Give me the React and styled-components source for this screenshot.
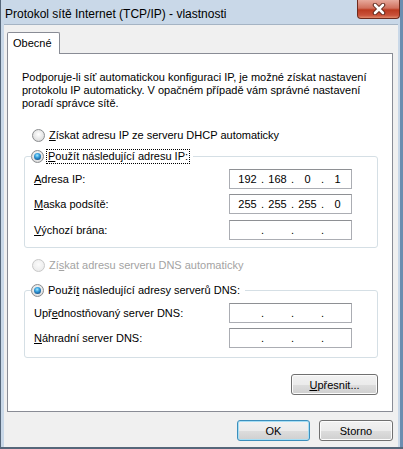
import React from "react";
import styled, { createGlobalStyle } from "styled-components";

const GlobalStyle = createGlobalStyle`
  html, body {
    margin: 0;
    padding: 0;
    background: #ffffff;
  }
  body {
    font-family: "Liberation Sans", Arial, sans-serif;
    font-size: 11px;
    color: #000;
  }
  * {
    box-sizing: border-box;
  }
`;

const Window = styled.div`
  width: 403px;
  height: 449px;
  display: flex;
  flex-direction: column;
  background: #c9d8e8;
  border-left: 1px solid #56677a;
  border-bottom: 2px solid #56677a;
  padding: 0 5px 0 3px;
  box-shadow: inset -3px 0 0 #6c8db0, inset -2px 0 0 #b9cde2;
`;

const TitleBar = styled.div`
  height: 24px;
  flex: none;
  display: flex;
  align-items: flex-start;
  justify-content: space-between;
`;

const Title = styled.span`
  font-size: 12px;
  margin-top: 7px;
  margin-left: 1px;
  color: #000;
`;

const CloseButton = styled.div`
  width: 43px;
  height: 19px;
  margin-right: -2px;
  border: 1px solid #6e2a1c;
  border-top: none;
  border-radius: 0 0 4px 4px;
  background: linear-gradient(#e7a99c 0%, #d0705d 45%, #bb3a20 55%, #c9523a 85%, #e08a6c 100%);
  display: flex;
  align-items: center;
  justify-content: center;
`;

const Client = styled.div`
  flex: 1;
  display: flex;
  flex-direction: column;
  background: #f0f0f0;
  padding: 7px 5px 0 3px;
  border-top: 1px solid #a5b4c4;
`;

const TabStrip = styled.div`
  display: flex;
  height: 21px;
`;

const Tab = styled.div`
  width: 53px;
  height: 22px;
  background: #ffffff;
  border: 1px solid #898c95;
  border-bottom: none;
  border-radius: 2px 2px 0 0;
  padding: 4px 0 0 5px;
  position: relative;
  z-index: 1;
`;

const Panel = styled.div`
  height: 359px;
  flex: none;
  background: #ffffff;
  border: 1px solid #898c95;
  display: flex;
  flex-direction: column;
  padding: 17px 14px 0 16px;
`;

const Intro = styled.p`
  margin: 0 0 0 -2px;
  line-height: 13px;
`;

const RadioRow = styled.label`
  display: flex;
  align-items: center;
  height: 15px;
  margin-top: ${(p) => p.$top || 0}px;
  margin-left: 8px;
  color: ${(p) => (p.$disabled ? "#a3a3a3" : "#000")};
`;

const Radio = styled.span`
  width: 13px;
  height: 13px;
  flex: none;
  border-radius: 50%;
  border: 1px solid ${(p) => (p.$disabled ? "#c8c8c8" : "#8a8c8e")};
  background: ${(p) =>
    p.$disabled
      ? "radial-gradient(circle at 50% 40%, #fbfbfb, #ececec 75%)"
      : "radial-gradient(circle at 50% 40%, #ffffff, #e2e2e2 65%, #cfcfcf)"};
  display: flex;
  align-items: center;
  justify-content: center;
  margin-right: 2px;
`;

const Dot = styled.span`
  width: 7px;
  height: 7px;
  border-radius: 50%;
  background: radial-gradient(circle at 45% 35%, #a8ecff 0, #39a3e0 35%, #13508a 80%, #0d3d6e 100%);
`;

const RadioText = styled.span`
  padding: 1px 1px;
  border: 1px ${(p) => (p.$focus ? "dotted #000" : "solid transparent")};
  line-height: 11px;
`;

const Key = styled.u`
  text-underline-offset: 1px;
`;

const Group = styled.fieldset`
  margin: ${(p) => p.$top}px 0 0 0;
  padding: 0 25px ${(p) => p.$bottom}px 9px;
  border: 1px solid #d5dfe5;
  border-radius: 3px;
  min-width: 0;
`;

const Legend = styled.legend`
  padding: 0 3px 0 0;
  margin-left: -3px;
`;

const LegendRow = styled.span`
  display: flex;
  align-items: center;
  height: 15px;
  background: #ffffff;
`;

const FieldRow = styled.div`
  display: flex;
  align-items: center;
  justify-content: space-between;
  height: 20px;
  margin-top: ${(p) => p.$top}px;
`;

const IpBox = styled.div`
  width: 123px;
  height: 20px;
  border: 1px solid #abadb3;
  border-top-color: #8e9094;
  background: #ffffff;
  display: flex;
  align-items: center;
  padding-left: 4px;
`;

const Octet = styled.span`
  width: 27px;
  text-align: center;
`;

const Sep = styled.span`
  width: 3px;
  text-align: center;
`;

const ButtonRow = styled.div`
  display: flex;
  justify-content: flex-end;
  gap: 9px;
  margin-top: ${(p) => p.$top}px;
  margin-right: ${(p) => p.$right}px;
`;

const Button = styled.button`
  width: ${(p) => p.$w}px;
  height: 21px;
  padding: 0;
  font: inherit;
  color: #000;
  border-radius: 3px;
  border: 1px solid ${(p) => (p.$default ? "#3c8fbc" : "#707070")};
  background: linear-gradient(#f2f2f2 0%, #ebebeb 50%, #dddddd 51%, #cfcfcf 100%);
  box-shadow: inset 0 0 0 1px ${(p) => (p.$default ? "#a6def5" : "#fcfcfc")};
`;

const IpField = ({ value }) => {
  const parts = value ? value.split(".") : ["", "", "", ""];
  return (
    <IpBox>
      {parts.map((p, i) => (
        <React.Fragment key={i}>
          <Octet>{p}</Octet>
          {i < 3 && <Sep>.</Sep>}
        </React.Fragment>
      ))}
    </IpBox>
  );
};

const CloseIcon = () => (
  <svg width="14" height="12" viewBox="0 0 14 12">
    <path d="M3 2 L11 10 M11 2 L3 10" stroke="#5b2418" strokeWidth="4.5" strokeLinecap="round" />
    <path d="M3 2 L11 10 M11 2 L3 10" stroke="#ffffff" strokeWidth="2.6" strokeLinecap="round" />
  </svg>
);

export default function App() {
  return (
    <>
      <GlobalStyle />
      <Window>
        <TitleBar>
          <Title>Protokol sítě Internet (TCP/IP) - vlastnosti</Title>
          <CloseButton>
            <CloseIcon />
          </CloseButton>
        </TitleBar>
        <Client>
          <TabStrip>
            <Tab>Obecné</Tab>
          </TabStrip>
          <Panel>
            <Intro>
              Podporuje-li síť automatickou konfiguraci IP, je možné získat nastavení
              <br />
              protokolu IP automaticky. V opačném případě vám správné nastavení
              <br />
              poradí správce sítě.
            </Intro>

            <RadioRow $top={18}>
              <Radio />
              <RadioText>
                <Key>Z</Key>ískat adresu IP ze serveru DHCP automaticky
              </RadioText>
            </RadioRow>

            <Group $top={6} $bottom={7}>
              <Legend>
                <LegendRow>
                  <Radio>
                    <Dot />
                  </Radio>
                  <RadioText $focus>
                    <Key>P</Key>oužít následující adresu IP:
                  </RadioText>
                </LegendRow>
              </Legend>
              <FieldRow $top={5}>
                <span>
                  <Key>A</Key>dresa IP:
                </span>
                <IpField value="192.168.0.1" />
              </FieldRow>
              <FieldRow $top={5}>
                <span>
                  <Key>M</Key>aska podsítě:
                </span>
                <IpField value="255.255.255.0" />
              </FieldRow>
              <FieldRow $top={6}>
                <span>
                  <Key>V</Key>ýchozí brána:
                </span>
                <IpField />
              </FieldRow>
            </Group>

            <RadioRow $top={10} $disabled>
              <Radio $disabled />
              <RadioText>
                Zí<Key>s</Key>kat adresu serveru DNS automaticky
              </RadioText>
            </RadioRow>

            <Group $top={10} $bottom={9}>
              <Legend>
                <LegendRow>
                  <Radio>
                    <Dot />
                  </Radio>
                  <RadioText>
                    Použí<Key>t</Key> následující adresy serverů DNS:
                  </RadioText>
                </LegendRow>
              </Legend>
              <FieldRow $top={5}>
                <span>
                  Upř<Key>e</Key>dnostňovaný server DNS:
                </span>
                <IpField />
              </FieldRow>
              <FieldRow $top={5}>
                <span>
                  <Key>N</Key>áhradní server DNS:
                </span>
                <IpField />
              </FieldRow>
            </Group>

            <ButtonRow $top={16} $right={0}>
              <Button $w={87}>
                <Key>U</Key>přesnit...
              </Button>
            </ButtonRow>
          </Panel>
          <ButtonRow $top={8} $right={0}>
            <Button $w={73} $default>
              OK
            </Button>
            <Button $w={74}>Storno</Button>
          </ButtonRow>
        </Client>
      </Window>
    </>
  );
}
